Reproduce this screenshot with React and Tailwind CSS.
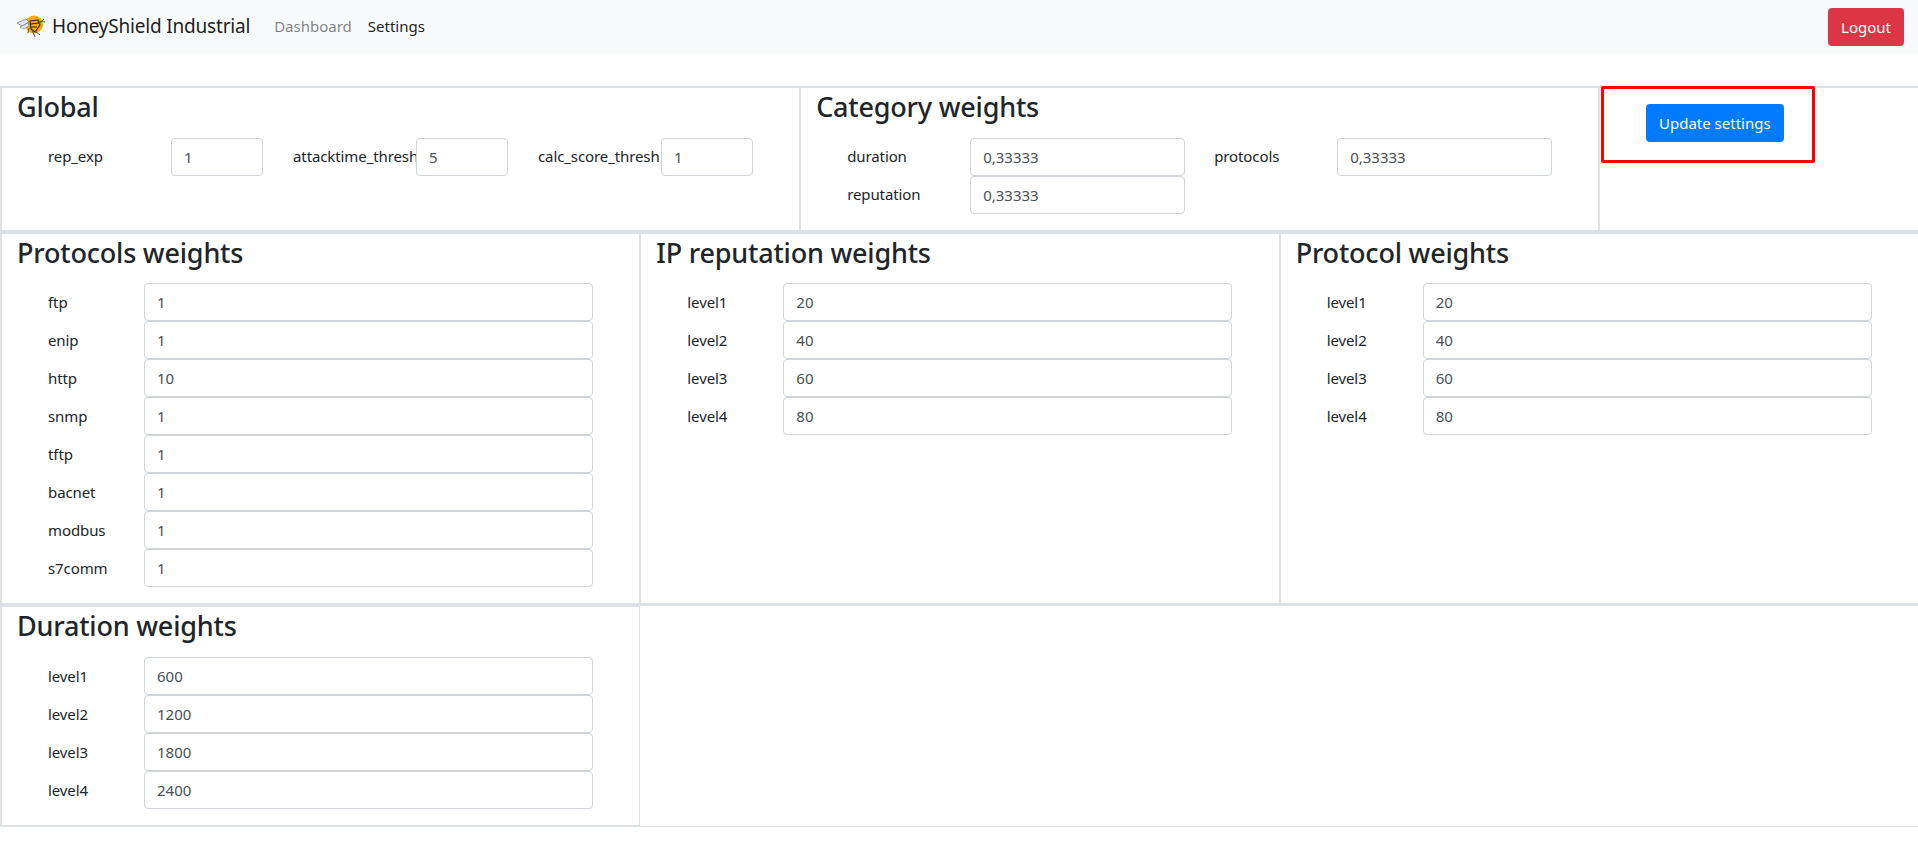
const FONT = "font-['Noto_Sans',sans-serif]";

const PROTOCOLS = [
  ["ftp", "1"],
  ["enip", "1"],
  ["http", "10"],
  ["snmp", "1"],
  ["tftp", "1"],
  ["bacnet", "1"],
  ["modbus", "1"],
  ["s7comm", "1"],
];

const LEVELS = [
  ["level1", "20"],
  ["level2", "40"],
  ["level3", "60"],
  ["level4", "80"],
];

const DURATIONS = [
  ["level1", "600"],
  ["level2", "1200"],
  ["level3", "1800"],
  ["level4", "2400"],
];

function Logo() {
  return (
    <svg viewBox="0 0 30 24" className="w-[30px] h-[24px] shrink-0" fill="none">
      <circle cx="18" cy="9.5" r="9" fill="#f5a80c" />
      <path d="M1 8 L10 4 L13 7 L6 11 Z" fill="#e4e6e8" stroke="#6b6f73" strokeWidth="0.7" />
      <path d="M4 12 L12 8 L13 11 L8 14 Z" fill="#eceef0" stroke="#7a7e82" strokeWidth="0.7" />
      <path d="M14 6 L22 5 L24 10 L19 17 L15 14 Z" stroke="#2b2417" strokeWidth="1.1" />
      <path d="M15 9 L23 8 M15 12 L21 12" stroke="#2b2417" strokeWidth="1.1" />
      <path d="M22 6 L29 7 M23 9 L28 4" stroke="#55514a" strokeWidth="0.9" />
      <path d="M16 15 L19 22 M19 16 L24 20 M13 13 L12 18" stroke="#55514a" strokeWidth="1" />
    </svg>
  );
}

function Field({ label, value, labelWidth, inputWidth }) {
  return (
    <div className="flex items-center h-[38px]">
      <label className="shrink-0 whitespace-nowrap text-[#212529] text-[15px] tracking-[-0.1px]" style={{ width: labelWidth }}>
        {label}
      </label>
      <input
        defaultValue={value}
        className="relative h-[38px] bg-white border border-[#ced4da] rounded-[4px] px-3 text-[15px] text-[#495057] outline-none"
        style={{ width: inputWidth }}
      />
    </div>
  );
}

function Heading({ children }) {
  return (
    <h3 className="h-[33.6px] -ml-px leading-[37px] mb-4 text-[27px] font-medium text-[#212529] tracking-[-0.2px]">
      {children}
    </h3>
  );
}

function WeightCard({ title, rows }) {
  return (
    <div className="w-1/3 border border-[#dee2e6] px-4 pb-4">
      <Heading>{title}</Heading>
      <div className="pl-[30px]">
        {rows.map(([label, value]) => (
          <Field key={label} label={label} value={value} labelWidth={96} inputWidth={449} />
        ))}
      </div>
    </div>
  );
}

export default function App() {
  return (
    <div className={`${FONT} bg-white min-h-[842px] relative overflow-hidden`}>
      {/* page is slightly wider than the window, the right border falls outside */}
      <div className="w-[1920px]">
        <nav className="h-[54px] bg-[#f8f9fa] flex items-center justify-between px-4">
          <div className="flex items-center">
            <a className="flex items-center gap-[6px] text-[19px] text-[#000000e6] mr-4 tracking-[-0.2px]">
              <Logo />
              <span className="mb-[2px]">HoneyShield Industrial</span>
            </a>
            <a className="px-2 mb-[2px] text-[15px] text-[#00000080]">Dashboard</a>
            <a className="px-2 mb-[2px] text-[15px] text-[#000000e6]">Settings</a>
          </div>
          <button className="h-[38px] w-[76px] bg-[#dc3545] text-white text-[15px] rounded-[4px]">Logout</button>
        </nav>

        <div className="mt-8">
          <div className="flex border border-[#dee2e6]">
            <div className="w-5/12 border border-[#dee2e6] px-4 pb-4">
              <Heading>Global</Heading>
              <div className="pl-[30px] grid grid-cols-[245px_245px_245px]">
                <Field label="rep_exp" value="1" labelWidth={123} inputWidth={92} />
                <Field label="attacktime_thresh" value="5" labelWidth={123} inputWidth={92} />
                <Field label="calc_score_thresh" value="1" labelWidth={123} inputWidth={92} />
              </div>
            </div>
            <div className="w-5/12 border border-[#dee2e6] px-4 pb-4">
              <Heading>Category weights</Heading>
              <div className="pl-[30px] grid grid-cols-[367px_367px]">
                <Field label="duration" value="0,33333" labelWidth={123} inputWidth={215} />
                <Field label="protocols" value="0,33333" labelWidth={123} inputWidth={215} />
                <Field label="reputation" value="0,33333" labelWidth={123} inputWidth={215} />
              </div>
            </div>
            <div className="w-2/12 border border-[#dee2e6] pt-4 pl-[45.5px]">
              <button className="h-[38px] w-[138px] bg-[#007bff] text-white text-[15px] rounded-[4px]">Update settings</button>
            </div>
          </div>

          <div className="flex border border-[#dee2e6]">
            <WeightCard title="Protocols weights" rows={PROTOCOLS} />
            <WeightCard title="IP reputation weights" rows={LEVELS} />
            <WeightCard title="Protocol weights" rows={LEVELS} />
          </div>

          <div className="flex border border-[#dee2e6]">
            <WeightCard title="Duration weights" rows={DURATIONS} />
          </div>
        </div>
      </div>

      {/* red annotation box drawn over the screenshot */}
      <div className="absolute left-[1601px] top-[86px] w-[214px] h-[77px] border-[3px] border-[#ff0000] rounded-[2px]" />
    </div>
  );
}
